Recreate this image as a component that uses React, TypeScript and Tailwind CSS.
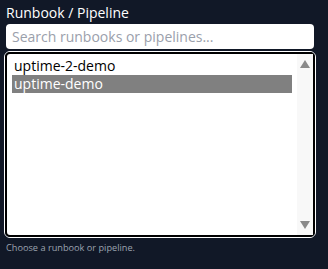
import React from 'react';

const font = { fontFamily: '"Open Sans", "Noto Sans", sans-serif' };

export default function App() {
  const items = ['uptime-2-demo', 'uptime-demo'];
  const selected = 'uptime-demo';

  return (
    <div className="h-[269px] w-[328px] bg-[#111827]" style={font}>
      <div className="w-80 px-1.5 pt-1">
        <label className="block text-[14px] leading-[18px] text-white">Runbook / Pipeline</label>
        <input
          className="mt-[2px] block h-[25px] w-full rounded-[4px] bg-white px-1.5 text-[14px] text-gray-900 outline-none placeholder:text-[#9aa0ab]"
          placeholder="Search runbooks or pipelines..."
        />
        <div className="-mx-[2px] mt-[2px] rounded-[6px] border border-white">
          <div className="flex h-[185px] rounded-[5px] border-2 border-black bg-white">
            <div className="flex-1 px-[5px] pt-[3px]">
              {items.map((it) => (
                <div
                  key={it}
                  className={`h-[18px] pl-[2px] text-[14px] leading-[17px] ${
                    it === selected ? 'bg-[#808080] text-white' : 'text-black'
                  }`}
                >
                  {it}
                </div>
              ))}
            </div>
            <div className="flex w-[16px] flex-col items-center justify-between bg-[#f8f8f8] py-[6px]">
              <svg width="10" height="8" viewBox="0 0 10 8">
                <path d="M5 0 L10 8 L0 8 Z" fill="#8a8a8a" />
              </svg>
              <svg width="10" height="8" viewBox="0 0 10 8">
                <path d="M0 0 L10 0 L5 8 Z" fill="#8a8a8a" />
              </svg>
            </div>
          </div>
        </div>
        <p className="mt-[4px] text-[9.2px] leading-[12px] text-[#9ca3af]">Choose a runbook or pipeline.</p>
      </div>
    </div>
  );
}
